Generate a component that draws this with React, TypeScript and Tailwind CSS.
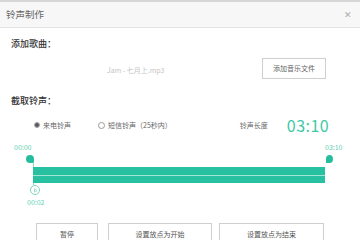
import React from "react";

const font = { fontFamily: '"Noto Sans CJK SC", "Noto Sans", sans-serif' };

export default function App() {
  return (
    <div
      className="w-[360px] h-[240px] overflow-hidden bg-white relative flex flex-col"
      style={font}
    >
      <div className="h-[2px] bg-[#d6d6d6] shrink-0" />
      <div className="h-[26px] shrink-0 flex items-center justify-between pl-[6px] pr-[8px] bg-[#f7f7f7] border-b border-[#e2e2e2]">
        <span className="text-[9.5px] text-[#666] leading-none">铃声制作</span>
        <span className="text-[9px] text-[#aaa] leading-none">✕</span>
      </div>

      <div className="pl-[11px] mt-[10px] text-[9px] leading-[12px] text-[#333] font-medium">
        添加歌曲：
      </div>

      <div className="flex items-center mt-[8px] h-[21px]">
        <span className="ml-[107px] text-[7px] text-[#c4c4c4] leading-none mt-[3px]">
          Jam - 七月上.mp3
        </span>
        <div className="ml-auto mr-[34px] w-[64px] h-[21px] border border-[#cfcfcf] flex items-center justify-center text-[7px] text-[#666]">
          添加音乐文件
        </div>
      </div>

      <div className="pl-[11px] mt-[16px] text-[9px] leading-[12px] text-[#333] font-medium">
        截取铃声：
      </div>

      <div className="flex items-center mt-[10px] h-[16px]">
        <span className="ml-[34px] w-[6px] h-[6px] rounded-full border border-[#999] flex items-center justify-center">
          <span className="w-[4px] h-[4px] rounded-full bg-[#555]" />
        </span>
        <span className="ml-[3px] text-[7px] text-[#666] leading-none">来电铃声</span>
        <span className="ml-[27px] w-[7px] h-[7px] rounded-full border border-[#999]" />
        <span className="ml-[3px] text-[7px] text-[#666] leading-none">短信铃声（25秒内）</span>
        <span className="ml-[68px] text-[7px] text-[#666] leading-none">铃声长度</span>
        <span className="ml-[19px] text-[16px] text-[#3cc9a6] leading-none tracking-[0.5px]">03:10</span>
      </div>

      <div className="relative mt-[8px] h-[72px] shrink-0">
        <span className="absolute left-[14px] top-[3px] text-[7px] text-[#5dcfb3] leading-none">00:00</span>
        <span className="absolute left-[325px] top-[3px] text-[7px] text-[#5dcfb3] leading-none">03:10</span>
        <div className="absolute left-[26px] top-[14px] w-[8px] h-[8px] bg-[#26bd9d] rounded-[50%_50%_0_50%]" />
        <div className="absolute left-[326px] top-[14px] w-[7px] h-[8px] bg-[#26bd9d] rounded-[50%_50%_50%_0]" />
        <div className="absolute left-[33px] top-[21px] w-px h-[23px] bg-[#8ad9c4]" />
        <div className="absolute left-[33px] top-[26px] w-[292px] h-[16px] bg-[#27c1a1] flex flex-col justify-center">
          <div className="h-px bg-[#9fe6d4]" />
        </div>
        <div className="absolute left-[30px] top-[44px] w-[10px] h-[10px] rounded-full border border-[#7fd6bf] bg-white flex items-center justify-center">
          <svg width="5" height="5" viewBox="0 0 5 5">
            <path d="M1.5 0.8 L4 2.5 L1.5 4.2 Z" fill="none" stroke="#7fd6bf" strokeWidth="0.7" />
          </svg>
        </div>
        <span className="absolute left-[27px] top-[58px] text-[7px] text-[#5dcfb3] leading-none">00:02</span>
      </div>

      <div className="flex mt-[10px] h-[22px]">
        <div className="ml-[36px] w-[62px] h-[22px] border border-[#cfcfcf] flex items-center justify-center text-[7px] text-[#555]">
          暂停
        </div>
        <div className="ml-[10px] w-[104px] h-[22px] border border-[#cfcfcf] flex items-center justify-center text-[7px] text-[#555]">
          设置放点为开始
        </div>
        <div className="ml-[7px] w-[105px] h-[22px] border border-[#cfcfcf] flex items-center justify-center text-[7px] text-[#555]">
          设置放点为结束
        </div>
      </div>
    </div>
  );
}
